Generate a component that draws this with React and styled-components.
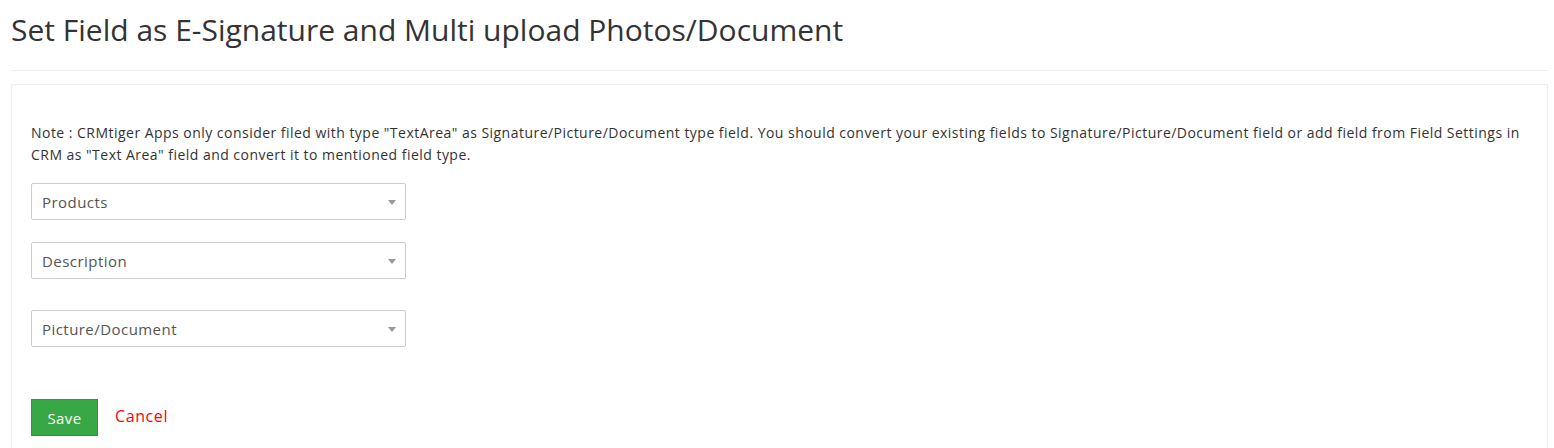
import React from 'react';
import styled, { createGlobalStyle } from 'styled-components';

const GlobalStyle = createGlobalStyle`
  body {
    margin: 0;
    background: #fff;
    font-family: 'Open Sans', 'Liberation Sans', sans-serif;
  }
`;

const Page = styled.div`
  padding: 0 6px 0 11px;
`;

const Heading = styled.h1`
  margin: 0;
  padding: 11px 0 0;
  font-size: 30px;
  font-weight: 400;
  line-height: 38px;
  color: #333;
  border-bottom: 1px solid #eee;
  box-sizing: border-box;
  height: 71px;
`;

const Panel = styled.div`
  margin-top: 13px;
  border: 1px solid #eee;
  border-bottom: none;
  padding: 37px 20px 12px 19px;
`;

const Note = styled.p`
  margin: 0 0 17px;
  font-size: 14px;
  line-height: 22px;
  letter-spacing: 0.47px;
  color: #333;
`;

const SelectBox = styled.div`
  position: relative;
  width: 353px;
  height: 35px;
  border: 1px solid #ccc;
  border-radius: 2px;
  margin-top: ${(p) => p.gap}px;
  display: flex;
  align-items: center;
  padding: 0 10px;
  font-size: 15px;
  letter-spacing: 0.45px;
  color: #555;
`;

const Caret = styled.span`
  position: absolute;
  right: 9px;
  top: 16px;
  width: 0;
  height: 0;
  border-left: 4px solid transparent;
  border-right: 4px solid transparent;
  border-top: 5px solid #999;
`;

const Actions = styled.div`
  display: flex;
  align-items: center;
  gap: 17px;
  margin-top: 52px;
`;

const SaveButton = styled.button`
  width: 67px;
  height: 37px;
  background: #38a846;
  border: 1px solid #2f9a3c;
  border-radius: 0;
  color: #fff;
  font-family: inherit;
  font-size: 15px;
  letter-spacing: 0.4px;
  padding: 0;
`;

const CancelLink = styled.a`
  color: #ff0000;
  font-size: 16px;
  letter-spacing: 0.6px;
  text-decoration: none;
  margin-top: -4px;
`;

function Select({ label, gap }) {
  return (
    <SelectBox gap={gap}>
      {label}
      <Caret />
    </SelectBox>
  );
}

export default function App() {
  return (
    <Page>
      <GlobalStyle />
      <Heading>Set Field as E-Signature and Multi upload Photos/Document</Heading>
      <Panel>
        <Note>
          Note : CRMtiger Apps only consider filed with type "TextArea" as Signature/Picture/Document type field. You should convert your existing fields to Signature/Picture/Document field or add field from Field Settings in CRM as "Text Area" field and convert it to mentioned field type.
        </Note>
        <Select label="Products" gap={0} />
        <Select label="Description" gap={22} />
        <Select label="Picture/Document" gap={31} />
        <Actions>
          <SaveButton>Save</SaveButton>
          <CancelLink href="#">Cancel</CancelLink>
        </Actions>
      </Panel>
    </Page>
  );
}
